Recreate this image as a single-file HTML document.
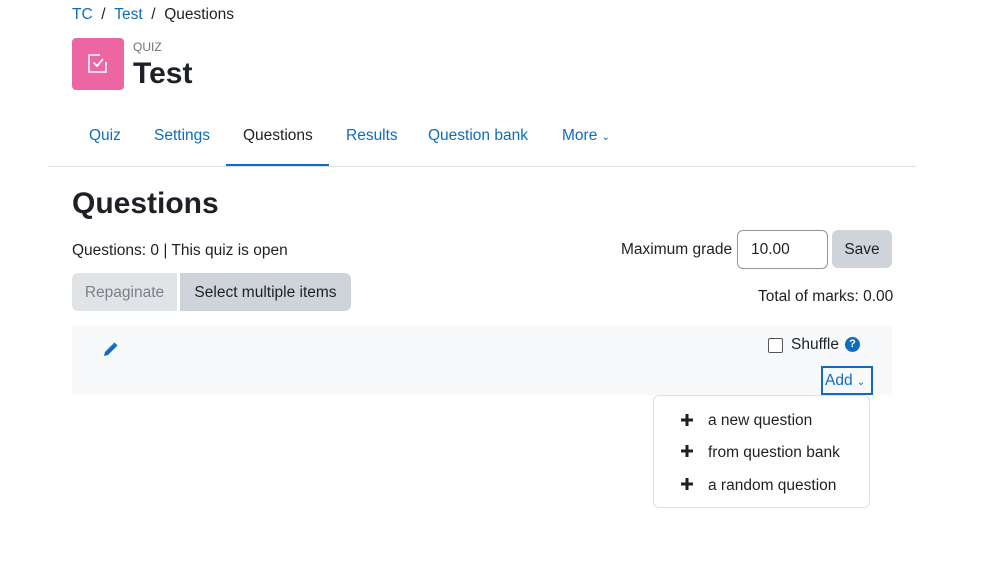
<!DOCTYPE html>
<html><head><meta charset="utf-8"><style>
body{margin:0;width:1000px;height:573px;background:#fff;font-family:"Liberation Sans",sans-serif;color:#1d2125;position:relative;overflow:hidden}
.a{position:absolute;white-space:nowrap}
.link{color:#0f6cbf}
.t{font-size:15.5px}
</style></head><body>
<div class="a t" style="left:72px;top:6px"><span class="link">TC</span>&nbsp; / &nbsp;<span class="link">Test</span>&nbsp; / &nbsp;Questions</div>
<div class="a" style="left:72px;top:38px;width:52px;height:52px;background:#eb66a2;border-radius:4px">
<svg width="52" height="52" viewBox="0 0 52 52"><path d="M28 17h-11v17h17v-10" stroke="#fff" stroke-width="1.8" fill="none" opacity=".85"/><path d="M21.5 24.5l3.5 3.5 6-7" stroke="#fff" stroke-width="1.8" fill="none"/></svg></div>
<div class="a" style="left:133px;top:40px;font-size:12px;color:#6a737b">QUIZ</div>
<div class="a" style="left:133px;top:57px;font-size:30px;font-weight:bold">Test</div>
<div class="a t link" style="left:89px;top:127px">Quiz</div>
<div class="a t link" style="left:154px;top:127px">Settings</div>
<div class="a t" style="left:243px;top:127px">Questions</div>
<div class="a t link" style="left:346px;top:127px">Results</div>
<div class="a t link" style="left:428px;top:127px">Question bank</div>
<div class="a t link" style="left:562px;top:127px">More <span style="font-size:10px">&#8964;</span></div>
<div class="a" style="left:226px;top:164px;width:103px;height:3px;background:#0f6cbf"></div>
<div class="a" style="left:48px;top:166px;width:868px;height:1px;background:#dee2e6"></div>
<div class="a" style="left:72px;top:187px;font-size:30px;font-weight:bold">Questions</div>
<div class="a t" style="left:72px;top:242px">Questions: 0 | This quiz is open</div>
<div class="a t" style="left:621px;top:241px">Maximum grade</div>
<div class="a t" style="left:737px;top:230px;width:91px;height:39px;border:1px solid #8f959e;border-radius:6px;box-sizing:border-box;padding:10px 13px">10.00</div>
<div class="a t" style="left:832px;top:230px;width:60px;height:38px;background:#ced4da;border-radius:6px;text-align:center;line-height:40px">Save</div>
<div class="a t" style="left:72px;top:273px;width:105px;height:38px;background:#e1e4e7;border-radius:6px 0 0 6px;color:#7a8087;text-align:center;line-height:40px">Repaginate</div>
<div class="a t" style="left:180px;top:273px;width:171px;height:38px;background:#ced4da;border-radius:0 6px 6px 0;text-align:center;line-height:40px">Select multiple items</div>
<div class="a t" style="left:758px;top:288px">Total of marks: 0.00</div>
<div class="a" style="left:72px;top:326px;width:820px;height:69px;background:#f8f9fa"></div>
<svg class="a" style="left:103px;top:342px" width="15" height="15" viewBox="0 0 15 15"><path d="M1 14l1-4 8-8 3 3-8 8z" fill="#0f6cbf"/><path d="M10 2l1.5-1.5 3 3L13 5z" fill="#0f6cbf"/></svg>
<div class="a" style="left:768px;top:338px;width:13px;height:13px;border:1px solid #555;border-radius:2px;background:#fff"></div>
<div class="a t" style="left:791px;top:336px">Shuffle</div>
<div class="a" style="left:845px;top:337px;width:15px;height:15px;border-radius:50%;background:#0f6cbf;color:#fff;font-size:11px;font-weight:bold;text-align:center;line-height:15px">?</div>
<div class="a t" style="left:821px;top:366px;width:52px;height:29px;border:2px solid #0f6cbf;box-sizing:border-box;color:#0f6cbf;padding:4px 0 0 2px">Add <span style="font-size:10px">&#8964;</span></div>
<div class="a" style="left:653px;top:395px;width:217px;height:113px;border:1px solid #dee2e6;border-radius:6px;background:#fff;box-sizing:border-box"></div>
<svg class="a" style="left:680px;top:413px" width="14" height="14"><path d="M7 1v12M1 7h12" stroke="#1d2125" stroke-width="3"/></svg>
<div class="a t" style="left:708px;top:412px">a new question</div>
<svg class="a" style="left:680px;top:444px" width="14" height="14"><path d="M7 1v12M1 7h12" stroke="#1d2125" stroke-width="3"/></svg>
<div class="a t" style="left:708px;top:444px">from question bank</div>
<svg class="a" style="left:680px;top:477px" width="14" height="14"><path d="M7 1v12M1 7h12" stroke="#1d2125" stroke-width="3"/></svg>
<div class="a t" style="left:708px;top:477px">a random question</div>
</body></html>
